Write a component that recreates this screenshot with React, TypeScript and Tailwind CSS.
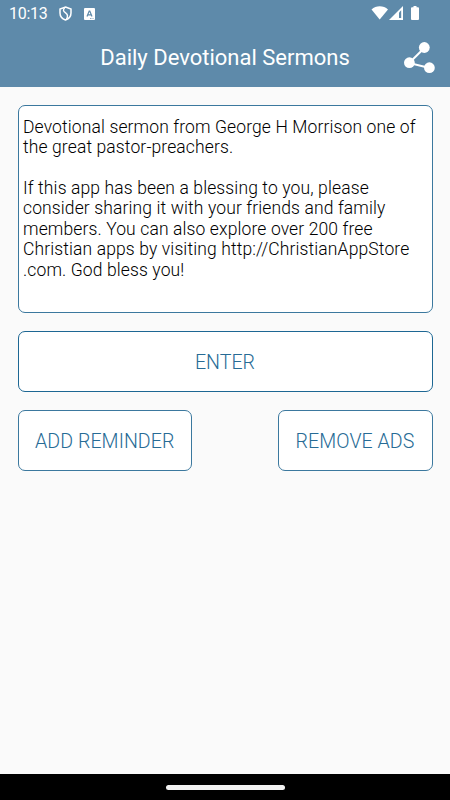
/*
 * Home screen: welcome note, enter button and the reminder / ads actions.
 */

const MESSAGE = [
  "Devotional sermon from George H Morrison one of",
  "the great pastor-preachers.",
  "",
  "If this app has been a blessing to you, please",
  "consider sharing it with your friends and family",
  "members. You can also explore over 200 free",
  "Christian apps by visiting http://ChristianAppStore",
  ".com. God bless you!",
];

function StatusBar() {
  return (
    <div className="flex h-[27px] items-center pl-[9px] pr-[30px] text-white">
      <span className="w-[39px] text-[16px] leading-[27px] tracking-[-0.3px]">10:13</span>
      <svg className="ml-[11px]" width="13" height="15" viewBox="0 0 13 15" fill="none" stroke="currentColor">
        <path d="M6.5 1 12 3v4c0 3.2-2.2 5.8-5.5 7C3.2 12.8 1 10.2 1 7V3z" strokeWidth="1.5" />
        <path d="M5.8 1.3C3.6 4.2 4.3 5.3 6.6 6.9 9 8.5 9.2 10.3 7.5 13.3" strokeWidth="1.4" />
      </svg>
      <svg className="ml-[12px]" width="11" height="12" viewBox="0 0 11 12">
        <rect width="11" height="12" rx="1" fill="currentColor" />
        <path d="M3 8.5 5.2 3h.6L8 8.5M3.8 6.8h3.4" fill="none" stroke="#5e8aaa" strokeWidth="1.2" />
        <path d="M6 10.5h3.5" stroke="#5e8aaa" strokeWidth="0.7" strokeDasharray="1 0.5" />
      </svg>
      <svg className="mt-[-1px] ml-auto" width="49" height="16" viewBox="0 0 49 16" fill="currentColor">
        <path d="M.5 4.5C5 .2 12.5 .2 17 4.5L8.7 14.5z" />
        <path d="M32 1v14H18z" />
        <path d="M28 7.5v5.500h2.200V5.300z" fill="#5e8aaa" />
        <path d="M41 2.2h1.5V1h3v1.2H47q1 0 1 1V14q0 1-1 1h-6q-1 0-1-1V3.200q0-1 1-1z" />
      </svg>
    </div>
  );
}

function ShareIcon() {
  return (
    <svg width="31" height="32" viewBox="0 0 31 32" fill="currentColor">
      <path d="M20.3 6 5.2 21 25.5 26" fill="none" stroke="currentColor" strokeWidth="2" />
      <circle cx="20.3" cy="5.5" r="5.4" />
      <circle cx="5.4" cy="20.7" r="5.4" />
      <circle cx="25.4" cy="25.7" r="5.4" />
    </svg>
  );
}

export default function App() {
  return (
    <div className="flex h-[800px] w-[450px] flex-col overflow-hidden bg-[#fafafa] font-['Roboto',sans-serif]">
      <header className="h-[87px] bg-[#5e8aaa] text-white">
        <StatusBar />
        <div className="grid h-[60px] grid-cols-[60px_1fr_60px] items-center">
          <h1 className="col-start-2 pt-px text-center text-[22px] leading-[60px] whitespace-nowrap">
            Daily Devotional Sermons
          </h1>
          <button aria-label="Share" className="pl-[13.5px]">
            <ShareIcon />
          </button>
        </div>
      </header>

      <main className="flex flex-1 flex-col gap-[18px] px-[17.5px] pt-[18px]">
        <section className="h-[208px] rounded-[7px] border border-[#3b789e] bg-white pt-[10.8px] pl-[4.5px] text-[17.5px] leading-[20.4px] font-[350] tracking-[0.12px] text-black">
          {MESSAGE.map((line, i) => (
            <p key={i} className="h-[20.4px] whitespace-nowrap">
              {line}
            </p>
          ))}
        </section>
        <button className="h-[61px] rounded-[7px] border border-[#1d6793] bg-white pt-[2px] text-[19.6px] font-[350] text-[#276b95]">
          ENTER
        </button>
        <div className="flex justify-between text-[19.6px] font-[350] text-[#276b95]">
          <button className="h-[61px] w-[174.5px] rounded-[7px] border border-[#3b789e] bg-white pt-[2px] tracking-[0.05px]">
            ADD REMINDER
          </button>
          <button className="h-[61px] w-[155px] rounded-[7px] border border-[#3b789e] bg-white pt-[2px] tracking-[0.05px]">
            REMOVE ADS
          </button>
        </div>
      </main>

      <footer className="flex h-[26px] items-center justify-center bg-black">
        <div className="h-[5px] w-[119px] rounded-full bg-[#f2f2f2]" />
      </footer>
    </div>
  );
}
